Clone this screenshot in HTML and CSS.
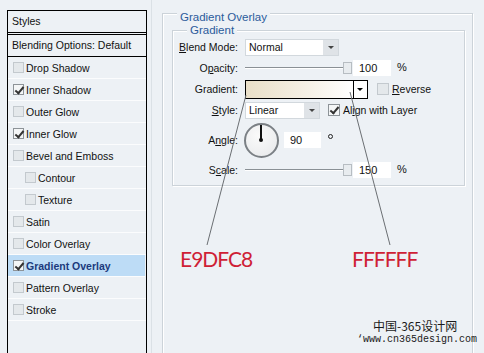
FILE: index.html
```html
<!DOCTYPE html>
<html lang="en">

<head>
    <meta charset="UTF-8">
    <title>Layer Style - Gradient Overlay</title>
    <link rel="stylesheet" href="styles.css">
</head>

<body>
    <div class="dialog">
        <div class="styles-list">
            <div class="list-head">Styles</div>
            <div class="list-blend">Blending Options: Default</div>
            <div class="list-item"><span class="check"></span>Drop Shadow</div>
            <div class="list-item"><span class="check checked"></span>Inner Shadow</div>
            <div class="list-item"><span class="check"></span>Outer Glow</div>
            <div class="list-item"><span class="check checked"></span>Inner Glow</div>
            <div class="list-item"><span class="check"></span>Bevel and Emboss</div>
            <div class="list-item sub"><span class="check"></span>Contour</div>
            <div class="list-item sub"><span class="check"></span>Texture</div>
            <div class="list-item"><span class="check"></span>Satin</div>
            <div class="list-item"><span class="check"></span>Color Overlay</div>
            <div class="list-item active"><span class="check checked"></span>Gradient Overlay</div>
            <div class="list-item"><span class="check"></span>Pattern Overlay</div>
            <div class="list-item"><span class="check"></span>Stroke</div>
        </div>

        <div class="main">
            <div class="group outer">
                <span class="group-title">Gradient Overlay</span>

                <div class="group inner">
                    <span class="group-title sub-title">Gradient</span>

                    <div class="form">
                        <div class="label"><u>B</u>lend Mode:</div>
                        <div class="field">
                            <div class="select blend-select">Normal<span class="select-arrow"></span></div>
                        </div>

                        <div class="label">O<u>p</u>acity:</div>
                        <div class="field">
                            <div class="slider"><span class="handle"></span></div>
                            <div class="num">100</div>
                            <span class="unit">%</span>
                        </div>

                        <div class="label">Gradient:</div>
                        <div class="field">
                            <div class="swatch"></div>
                            <div class="swatch-arrow"></div>
                            <span class="box reverse-box"></span>
                            <span class="opt"><u>R</u>everse</span>
                        </div>

                        <div class="label"><u>S</u>tyle:</div>
                        <div class="field">
                            <div class="select style-select">Linear<span class="select-arrow"></span></div>
                            <span class="box checked align-box"></span>
                            <span class="opt">Al<u>i</u>gn with Layer</span>
                        </div>

                        <div class="label">A<u>n</u>gle:</div>
                        <div class="field">
                            <div class="dial"><span class="dial-hand"></span><span class="dial-dot"></span></div>
                            <div class="num angle-num">90</div>
                            <span class="degree"></span>
                        </div>

                        <div class="label">S<u>c</u>ale:</div>
                        <div class="field">
                            <div class="slider"><span class="handle"></span></div>
                            <div class="num">150</div>
                            <span class="unit">%</span>
                        </div>
                    </div>
                </div>

                <div class="notes">
                    <span class="note">E9DFC8</span>
                    <span class="note">FFFFFF</span>
                </div>
            </div>
        </div>
    </div>

    <svg class="pointers" width="484" height="353" viewBox="0 0 484 353">
        <line x1="246" y1="95" x2="207" y2="245" />
        <line x1="350" y1="92" x2="390" y2="245" />
    </svg>

    <div class="watermark">
        <div class="wm-cn">中国-365设计网</div>
        <div class="wm-url">‘www.cn365design.com</div>
    </div>
</body>

</html>
```

FILE: styles.css
```css
* {
    box-sizing: border-box;
}

body {
    margin: 0;
    width: 484px;
    height: 353px;
    overflow: hidden;
    position: relative;
    background-color: #edf1f5;
    font-family: "Liberation Sans", Arial, sans-serif;
    font-size: 10.5px;
    color: #111;
}

.dialog {
    display: flex;
    align-items: flex-start;
    height: 353px;
}

/* left list of styles */

.styles-list {
    flex: none;
    margin: 10px 0 0 7px;
    width: 140px;
    height: 343px;
    border: 1px solid #000;
    border-bottom: none;
}

.list-head {
    height: 24px;
    padding-left: 4px;
    line-height: 21px;
    border-bottom: 3px double #000;
}

.list-blend {
    height: 22px;
    padding-left: 4px;
    line-height: 21px;
    border-bottom: 1px solid #000;
}

.list-item {
    height: 22px;
    display: flex;
    align-items: center;
    gap: 2px;
    padding-left: 5px;
    border-bottom: 1px solid #fbfcfd;
}

.list-item.sub {
    padding-left: 17px;
}

.list-item.active {
    margin-right: 1px;
    background-color: #bddcf6;
    color: #1b3a7c;
    font-weight: bold;
}

.check,
.box {
    flex: none;
    position: relative;
    width: 11px;
    height: 11px;
    border: 1px solid #c3c9ce;
    background-color: #e4e8eb;
}

.check.checked,
.box.checked {
    border-color: #8d9398;
    background-color: #f4f6f7;
}

.check.checked::after,
.box.checked::after {
    content: "";
    position: absolute;
    left: 3px;
    top: 0px;
    width: 3px;
    height: 7px;
    border-right: 2px solid #333;
    border-bottom: 2px solid #333;
    transform: rotate(40deg);
}

/* right side */

.main {
    flex: none;
    margin-left: 4px;
    height: 353px;
    padding: 13px 0 0 10px;
    border-left: 1px solid #dbe1e6;
}

.group {
    position: relative;
    border: 1px solid #ccd3d9;
    box-shadow: inset 1px 1px 0 #fff, 1px 1px 0 #fff;
}

.outer {
    width: 311px;
    height: 342px;
    padding: 16px 7px 0 9px;
    border-bottom: none;
}

.inner {
    height: 156px;
    padding: 7px 0 0 0;
}

.group-title {
    position: absolute;
    top: -4px;
    left: 14px;
    padding: 0 3px;
    line-height: 14px;
    font-size: 11.5px;
    color: #2b5b9b;
    background-color: #edf1f5;
}

.group-title.sub-title {
    top: -8px;
}

.form {
    display: grid;
    grid-template-columns: 65px auto;
    grid-template-rows: 18px 18px 18px 18px 36px 18px;
    column-gap: 7px;
    row-gap: 3px;
}

.label {
    display: flex;
    align-items: center;
    justify-content: flex-end;
    white-space: nowrap;
}

.field {
    display: flex;
    align-items: center;
}

.select {
    position: relative;
    height: 17px;
    padding-left: 3px;
    line-height: 15px;
    background-color: #fff;
    border: 1px solid #d2d8dd;
}

.blend-select {
    width: 94px;
}

.style-select {
    width: 75px;
}

.select-arrow {
    position: absolute;
    top: 0;
    right: 0;
    width: 15px;
    height: 15px;
    background-color: #dfe3e7;
}

.select-arrow::after,
.swatch-arrow::after {
    content: "";
    position: absolute;
    left: 5px;
    top: 6px;
    border-left: 3px solid transparent;
    border-right: 3px solid transparent;
    border-top: 3px solid #444;
}

.slider {
    position: relative;
    width: 107px;
    height: 16px;
}

.slider::before {
    content: "";
    position: absolute;
    left: 0;
    right: 4px;
    top: 7px;
    border-top: 1px solid #8a9095;
    border-bottom: 1px solid #fff;
}

.handle {
    position: absolute;
    right: 0;
    top: 2px;
    width: 9px;
    height: 12px;
    background-color: #e8ecef;
    border: 1px solid #b7bdc2;
}

.num {
    width: 38px;
    height: 16px;
    margin-left: 1px;
    padding-left: 6px;
    line-height: 16px;
    font-size: 11px;
    background-color: #fff;
}

.unit {
    margin-left: 6px;
    margin-top: -3px;
    font-size: 11px;
}

.swatch {
    width: 109px;
    height: 19px;
    border: 1px solid #000;
    background: linear-gradient(to right, #e9dfc8, #f6f1e7 60%, #fff);
}

.swatch-arrow {
    position: relative;
    width: 14px;
    height: 19px;
    border: 1px solid #000;
    border-left: none;
    background-color: #fff;
}

.swatch-arrow::after {
    left: 3px;
    top: 7px;
    border-top-color: #000;
}

.reverse-box {
    width: 12px;
    height: 12px;
    margin-left: 9px;
}

.align-box {
    width: 12px;
    height: 12px;
    margin-left: 8px;
    border-color: #555;
}

.opt {
    margin-left: 3px;
}

.dial {
    position: relative;
    width: 35px;
    height: 35px;
    margin-left: -1px;
    border: 2px solid #7b8085;
    border-radius: 50%;
    background: radial-gradient(circle at 40% 35%, #fafafa, #e6e8ea);
}

.dial-hand {
    position: absolute;
    left: 14px;
    top: 0;
    width: 2px;
    height: 15px;
    background-color: #111;
}

.dial-dot {
    position: absolute;
    left: 13px;
    top: 13px;
    width: 4px;
    height: 4px;
    border-radius: 50%;
    background-color: #111;
}

.angle-num {
    width: 37px;
    margin-left: 5px;
}

.degree {
    width: 5px;
    height: 5px;
    margin-left: 7px;
    margin-top: -7px;
    border: 1px solid #222;
    border-radius: 50%;
}

/* colour notes */

.notes {
    display: grid;
    grid-template-columns: 172px auto;
    margin-top: 60px;
    padding-left: 8px;
}

.note {
    font-family: Lato, "Open Sans", sans-serif;
    font-size: 21px;
    line-height: 26px;
    letter-spacing: -1px;
    color: #cf1f36;
}

.pointers {
    position: absolute;
    left: 0;
    top: 0;
    pointer-events: none;
}

.pointers line {
    stroke: #6b6f73;
    stroke-width: 1;
}

.watermark {
    position: absolute;
    left: 357px;
    top: 318px;
    color: #1a1a1a;
}

.wm-cn {
    padding-left: 16px;
    font-family: "Noto Sans CJK SC", sans-serif;
    font-size: 12px;
    line-height: 15px;
}

.wm-url {
    font-family: "Liberation Mono", monospace;
    font-size: 10px;
    line-height: 13px;
}
```
